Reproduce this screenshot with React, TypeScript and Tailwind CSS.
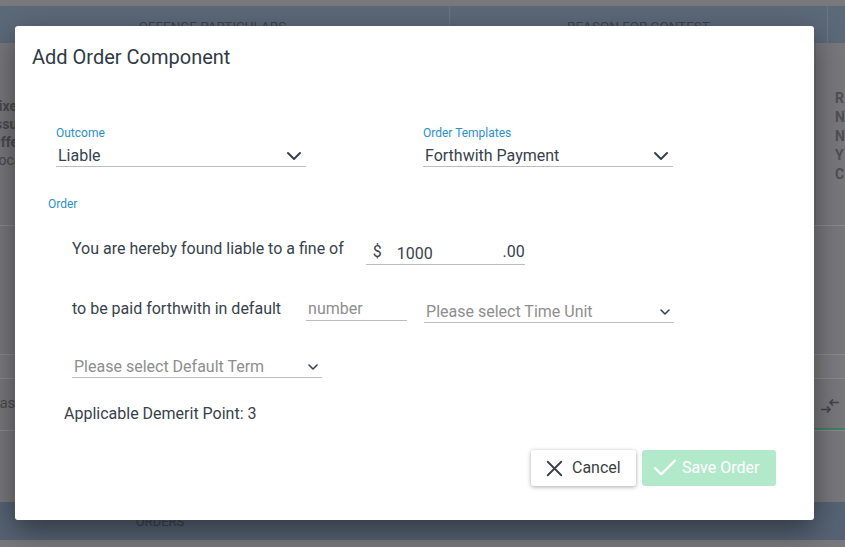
import { ChevronDown, X, Check } from "lucide-react";

function Select({ value, placeholder, width, small }: { value?: string; placeholder?: string; width: string; small?: boolean }) {
  return (
    <div className={`${width} flex items-center justify-between border-b border-[#bdbdbd] pl-[2px] h-[22px] ${small ? "pr-[1px]" : "pr-0"}`}>
      <span className={value ? "text-[16px] text-[#37424c]" : "text-[16px] text-[#8e8e8e]"}>{value ?? placeholder}</span>
      {small ? (
        <ChevronDown className="w-[16px] h-[16px] text-[#37424c]" strokeWidth={2.4} />
      ) : (
        <ChevronDown className="w-[24px] h-[24px] text-[#37424c]" strokeWidth={2} />
      )}
    </div>
  );
}

export default function App() {
  return (
    <div className="relative w-[845px] h-[547px] overflow-hidden bg-[#78777b] font-['Roboto',sans-serif]">
      {/* page behind the dialog, dimmed */}
      <div className="flex flex-col h-full">
        <div className="h-[6px] bg-[#79787c]" />
        <div className="h-[37px] bg-[#5c6979] flex text-[13.5px] text-[#3c4550] uppercase">
          <div className="w-[450px] border-r border-[#6a7685] flex justify-center pr-[24px] pt-[10px]">Offence Particulars</div>
          <div className="w-[378px] border-r border-[#6a7685] flex justify-center pt-[10px]">Reason for Contest</div>
          <div className="flex-1" />
        </div>
        <div className="h-[183px] flex border-b border-[#8a898d]">
          <div className="w-[450px] flex flex-col pt-[54px] -ml-[9px] text-[14px] leading-[18px] font-bold text-[#4a4a4e]">
            <span>Fixed</span>
            <span>Issue</span>
            <span>Offe</span>
            <span className="font-normal">Loca</span>
          </div>
          <div className="w-[378px] border-r border-[#6d6c70]" />
          <div className="flex-1 flex flex-col pt-[46px] pl-[19px] text-[14px] leading-[19px] font-bold text-[#4f4f53]">
            <span>R</span>
            <span>N</span>
            <span>N</span>
            <span>Y</span>
            <span>C</span>
          </div>
        </div>
        <div className="h-[128px]" />
        <div className="h-[25px] bg-[#7b7a7e] border-y border-[#8a898d]" />
        <div className="h-[49px] flex items-center relative">
          <span className="-ml-[10px] text-[15px] text-[#4a4a4e]">Pass</span>
          <svg className="ml-auto mr-[5px] mt-[4px]" width="20" height="14" viewBox="0 0 20 14" fill="none" stroke="#3f4450" strokeWidth="1.6">
            <path d="M1 10.5h9M7 7.5l3 3-3 3" />
            <path d="M19 3.5h-9M13 0.5l-3 3 3 3" />
          </svg>
        </div>
        <div className="h-[2px] ml-[815px] bg-[#3f7f63]" />
        <div className="h-[72px] border-t border-[#8a898d]" />
        <div className="h-[38px] bg-[#566374] flex text-[13px] text-[#3c4550] uppercase">
          <div className="w-[320px] flex justify-center pt-[10px]">Orders</div>
        </div>
        <div className="flex-1 bg-[#79787c]" />
      </div>

      {/* dialog */}
      <div className="absolute left-[15px] top-[26px] w-[799px] h-[494px] bg-white rounded-[3px] shadow-[0_10px_30px_rgba(0,0,0,0.45)] flex flex-col text-[#37424c]">
        <h2 className="pl-[17px] pt-[19px] text-[20px] leading-[24px] text-[#2f3a44]">Add Order Component</h2>

        <div className="flex pl-[41px] gap-[117px] mt-[56px]">
          <div className="flex flex-col">
            <label className="text-[12px] leading-[16px] mb-[4px] text-[#2a8fcb]">Outcome</label>
            <Select value="Liable" width="w-[250px]" />
          </div>
          <div className="flex flex-col">
            <label className="text-[12px] leading-[16px] mb-[4px] text-[#2a8fcb]">Order Templates</label>
            <Select value="Forthwith Payment" width="w-[250px]" />
          </div>
        </div>

        <div className="pl-[33px] mt-[29px] text-[12px] leading-[16px] text-[#2a8fcb]">Order</div>

        <div className="flex items-end pl-[57px] mt-[26px] text-[16px] leading-[22px]">
          <span className="mb-[5px]">You are hereby found liable to a fine of</span>
          <div className="ml-[22px] w-[159px] h-[26px] flex items-end border-b border-[#bdbdbd] pb-[0px] leading-[20px]">
            <span className="pl-[7px] mb-[2px]">$</span>
            <span className="pl-[15px]">1000</span>
            <span className="ml-auto mb-[2px]">.00</span>
          </div>
        </div>

        <div className="flex items-end pl-[57px] mt-[33px] text-[16px] leading-[22px]">
          <span className="mb-[3px]">to be paid forthwith in default</span>
          <div className="ml-[25px] w-[101px] h-[22px] border-b border-[#bdbdbd] pl-[2px] text-[#8e8e8e] leading-[20px] mb-[2px]">number</div>
          <div className="ml-[17px]">
            <Select placeholder="Please select Time Unit" width="w-[250px]" small />
          </div>
        </div>

        <div className="pl-[57px] mt-[33px]">
          <Select placeholder="Please select Default Term" width="w-[250px]" small />
        </div>

        <div className="pl-[49px] mt-[26px] text-[16px] leading-[20px]">Applicable Demerit Point: 3</div>

        <div className="flex justify-end gap-[6px] pr-[38px] mt-[26px]">
          <button className="w-[105px] h-[36px] bg-white rounded-[3px] shadow-[0_1px_4px_rgba(0,0,0,0.35)] flex items-center pl-[10px] gap-[4px] text-[16px] text-[#3a3f45]">
            <X className="w-[27px] h-[27px]" strokeWidth={1.6} />
            Cancel
          </button>
          <button className="w-[134px] h-[36px] bg-[#b3e9cb] rounded-[3px] flex items-center pl-[8px] gap-[2px] text-[16px] text-white">
            <Check className="w-[30px] h-[30px]" strokeWidth={1.8} />
            Save Order
          </button>
        </div>
      </div>
    </div>
  );
}
